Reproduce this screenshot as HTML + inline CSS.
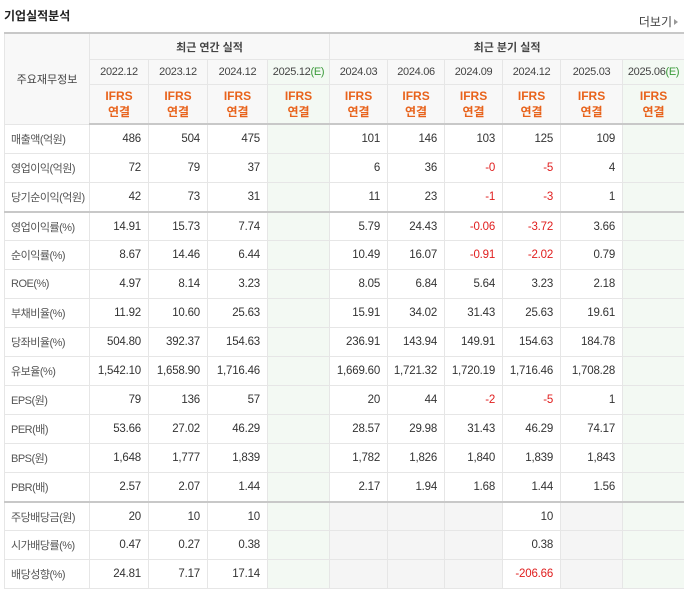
<!DOCTYPE html>
<html><head><meta charset="utf-8"><style>
body{margin:0;background:#fff;font-family:"Liberation Sans","Noto Sans CJK KR",sans-serif;color:#333;width:684px;height:585px;overflow:hidden;position:relative}
.t{position:absolute;left:4px;top:7px;font-size:12px;font-weight:bold;color:#222}
.more{position:absolute;right:6px;top:13px;font-size:12px;color:#444}
.more:after{content:"";display:inline-block;border-left:4px solid #999;border-top:3px solid transparent;border-bottom:3px solid transparent;margin-left:2px;vertical-align:1px}
table{position:absolute;left:4px;top:32px;border-collapse:collapse;table-layout:fixed;width:680px;font-size:11.5px}
td,th{border:1px solid #e6e6e6;padding:0;overflow:hidden;white-space:nowrap}
th{background:#f8f8f8;font-weight:normal;color:#444;font-size:11px}
thead tr:first-child th{border-top:2px solid #c8c8c8;font-weight:bold;height:25px}
tr.h2 th{height:24px;letter-spacing:-0.3px}
tr.h3 th{height:38px;color:#e8631c;font-weight:bold;line-height:16px;border-bottom:2px solid #c8c8c8;font-size:12px}
td{height:28px;text-align:right;padding-right:7px;letter-spacing:-0.2px}
td.l{text-align:left;padding-left:6px;color:#555;background:#fff;font-size:11px;letter-spacing:-0.5px}
.e{background:#f3f9f3!important}
.r{color:#e01e1e}
.g{background:#f5f5f5}
.sep td{border-top:2px solid #c8c8c8;height:27px}
.b1{border-left:1px solid #bbb}
.gr{color:#3a9a3a}
</style></head><body>
<div class="t">기업실적분석</div><div class="more">더보기</div>
<table>
<colgroup><col style="width:85px"><col style="width:59px"><col style="width:59px"><col style="width:60px"><col style="width:62px"><col style="width:58px"><col style="width:57px"><col style="width:58px"><col style="width:58px"><col style="width:62px"><col style="width:62px"></colgroup>
<thead>
<tr><th rowspan="3" style="font-weight:normal;background:#f8f8f8">주요재무정보</th><th colspan="4">최근 연간 실적</th><th colspan="6" class="b1">최근 분기 실적</th></tr>
<tr class="h2"><th>2022.12</th><th>2023.12</th><th>2024.12</th><th class="e">2025.12<span class="gr">(E)</span></th><th class="b1">2024.03</th><th>2024.06</th><th>2024.09</th><th>2024.12</th><th>2025.03</th><th class="e">2025.06<span class="gr">(E)</span></th></tr>
<tr class="h3"><th>IFRS<br>연결</th><th>IFRS<br>연결</th><th>IFRS<br>연결</th><th class="e">IFRS<br>연결</th><th class="b1">IFRS<br>연결</th><th>IFRS<br>연결</th><th>IFRS<br>연결</th><th>IFRS<br>연결</th><th>IFRS<br>연결</th><th class="e">IFRS<br>연결</th></tr>
</thead>
<tbody>
<tr><td class="l">매출액(억원)</td><td>486</td><td>504</td><td>475</td><td class="e"></td><td class="b1">101</td><td>146</td><td>103</td><td>125</td><td>109</td><td class="e"></td></tr>
<tr><td class="l">영업이익(억원)</td><td>72</td><td>79</td><td>37</td><td class="e"></td><td class="b1">6</td><td>36</td><td class="r">-0</td><td class="r">-5</td><td>4</td><td class="e"></td></tr>
<tr><td class="l">당기순이익(억원)</td><td>42</td><td>73</td><td>31</td><td class="e"></td><td class="b1">11</td><td>23</td><td class="r">-1</td><td class="r">-3</td><td>1</td><td class="e"></td></tr>
<tr class="sep"><td class="l">영업이익률(%)</td><td>14.91</td><td>15.73</td><td>7.74</td><td class="e"></td><td class="b1">5.79</td><td>24.43</td><td class="r">-0.06</td><td class="r">-3.72</td><td>3.66</td><td class="e"></td></tr>
<tr><td class="l">순이익률(%)</td><td>8.67</td><td>14.46</td><td>6.44</td><td class="e"></td><td class="b1">10.49</td><td>16.07</td><td class="r">-0.91</td><td class="r">-2.02</td><td>0.79</td><td class="e"></td></tr>
<tr><td class="l">ROE(%)</td><td>4.97</td><td>8.14</td><td>3.23</td><td class="e"></td><td class="b1">8.05</td><td>6.84</td><td>5.64</td><td>3.23</td><td>2.18</td><td class="e"></td></tr>
<tr><td class="l">부채비율(%)</td><td>11.92</td><td>10.60</td><td>25.63</td><td class="e"></td><td class="b1">15.91</td><td>34.02</td><td>31.43</td><td>25.63</td><td>19.61</td><td class="e"></td></tr>
<tr><td class="l">당좌비율(%)</td><td>504.80</td><td>392.37</td><td>154.63</td><td class="e"></td><td class="b1">236.91</td><td>143.94</td><td>149.91</td><td>154.63</td><td>184.78</td><td class="e"></td></tr>
<tr><td class="l">유보율(%)</td><td>1,542.10</td><td>1,658.90</td><td>1,716.46</td><td class="e"></td><td class="b1">1,669.60</td><td>1,721.32</td><td>1,720.19</td><td>1,716.46</td><td>1,708.28</td><td class="e"></td></tr>
<tr><td class="l">EPS(원)</td><td>79</td><td>136</td><td>57</td><td class="e"></td><td class="b1">20</td><td>44</td><td class="r">-2</td><td class="r">-5</td><td>1</td><td class="e"></td></tr>
<tr><td class="l">PER(배)</td><td>53.66</td><td>27.02</td><td>46.29</td><td class="e"></td><td class="b1">28.57</td><td>29.98</td><td>31.43</td><td>46.29</td><td>74.17</td><td class="e"></td></tr>
<tr><td class="l">BPS(원)</td><td>1,648</td><td>1,777</td><td>1,839</td><td class="e"></td><td class="b1">1,782</td><td>1,826</td><td>1,840</td><td>1,839</td><td>1,843</td><td class="e"></td></tr>
<tr><td class="l">PBR(배)</td><td>2.57</td><td>2.07</td><td>1.44</td><td class="e"></td><td class="b1">2.17</td><td>1.94</td><td>1.68</td><td>1.44</td><td>1.56</td><td class="e"></td></tr>
<tr class="sep"><td class="l">주당배당금(원)</td><td>20</td><td>10</td><td>10</td><td class="e"></td><td class="b1 g"></td><td class="g"></td><td class="g"></td><td>10</td><td class="g"></td><td class="e"></td></tr>
<tr><td class="l">시가배당률(%)</td><td>0.47</td><td>0.27</td><td>0.38</td><td class="e"></td><td class="b1 g"></td><td class="g"></td><td class="g"></td><td>0.38</td><td class="g"></td><td class="e"></td></tr>
<tr><td class="l">배당성향(%)</td><td>24.81</td><td>7.17</td><td>17.14</td><td class="e"></td><td class="b1 g"></td><td class="g"></td><td class="g"></td><td class="r">-206.66</td><td class="g"></td><td class="e"></td></tr>
</tbody></table>
</body></html>
